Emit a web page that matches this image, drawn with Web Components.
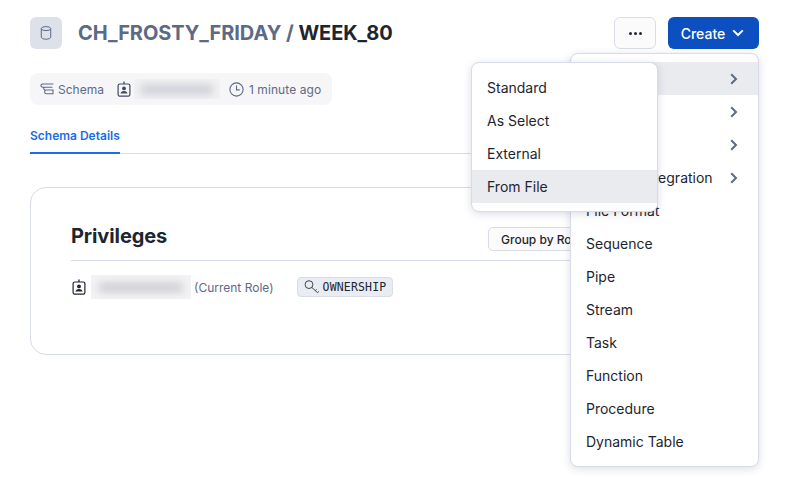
<!DOCTYPE html>
<html>
<head>
<meta charset="utf-8">
<style>
  html, body { margin: 0; background: #fff; }
  body { font-family: Inter, "Liberation Sans", sans-serif; color: #1e252f; overflow: hidden; width: 797px; height: 478px; }
</style>
</head>
<body>
<schema-page></schema-page>

<script>
const icons = {
  db: `<svg width="16" height="16" viewBox="0 0 16 16" fill="none" stroke="#5d6a85" stroke-width="1"><ellipse cx="8" cy="3.6" rx="4.7" ry="2"/><path d="M3.3 3.6v8.6c0 1.2 2.1 2 4.7 2s4.7-.8 4.7-2V3.6"/></svg>`,
  schema: `<svg width="16" height="16" viewBox="0 0 16 16" fill="none" stroke="#5d6a85" stroke-width="1.1" stroke-linecap="round"><path d="M14 3H3.5a1.6 1.6 0 0 0 0 3.2H13a1 1 0 0 1 0 0M6 6.2a1.4 1.4 0 0 0 .2 2.8"/><path d="M14 9H7.5a1.9 1.9 0 0 0 0 3.8H14V9z"/></svg>`,
  role: (c) => `<svg width="14" height="16" viewBox="0 0 14 16" fill="none"><path d="M7 .6v2.4" stroke="${c}" stroke-width="1.3"/><rect x="1.1" y="3" width="11.8" height="12.2" rx="1.6" stroke="${c}" stroke-width="1.2"/><circle cx="7" cy="7.4" r="1.9" fill="${c}"/><path d="M3.6 12.6c0-1.7 1.4-2.6 3.4-2.6s3.4.9 3.4 2.6z" fill="${c}"/></svg>`,
  clock: `<svg width="15" height="15" viewBox="0 0 15 15" fill="none" stroke="#5d6a85" stroke-width="1.1"><circle cx="7.5" cy="7.5" r="6.6"/><path d="M7.5 3.6v4.3h3.2"/></svg>`,
  key: `<svg width="17" height="14" viewBox="0 0 17 14" fill="none" stroke="#3c4656" stroke-width="1"><circle cx="5" cy="4.6" r="3.9"/><path d="M7.8 7.4l5.6 5.2M11.2 10.6l1.4-1.1M13.4 12.6l1.5-1.2"/></svg>`,
  chev: `<svg width="10" height="12" viewBox="0 0 10 12" fill="none" stroke="#5d6a85" stroke-width="2"><path d="M2.2 1.2 7 6l-4.8 4.8"/></svg>`,
  down: `<svg width="12" height="8" viewBox="0 0 12 8" fill="none" stroke="#fff" stroke-width="2"><path d="M1.2 1.4 6 6l4.8-4.6"/></svg>`
};

class BlurName extends HTMLElement {
  constructor() {
    super();
    this.attachShadow({mode: 'open'}).innerHTML = `
      <style>
        :host { display: inline-flex; align-items: center; justify-content: center; background: #f2f2f3; overflow: hidden; }
        i { display: block; width: 84%; height: 9px; background: #cbccd3; filter: blur(4px); }
      </style>
      <i></i>`;
  }
}
customElements.define('blur-name', BlurName);

class PageHeader extends HTMLElement {
  constructor() {
    super();
    this.attachShadow({mode: 'open'}).innerHTML = `
      <style>
        :host { display: flex; align-items: center; height: 32px; }
        .tile { width: 32px; height: 32px; border-radius: 6px; background: #dde2ea; display: flex; align-items: center; justify-content: center; margin-right: 16px; }
        h1 { margin: 0; font-size: 20px; line-height: 32px; font-weight: 700; letter-spacing: -.05px; color: #5d6a85; flex: 1; white-space: nowrap; }
        h1 b { font-weight: 700; color: #1e252f; }
        button { font-family: inherit; height: 32px; border-radius: 6px; display: flex; align-items: center; justify-content: center; padding: 0; }
        .more { width: 42px; border: 1px solid #dadde8; background: #fbfbfc; margin-right: 12px; gap: 2px; }
        .more i { width: 3px; height: 3px; border-radius: 50%; background: #1e252f; }
        .create { width: 91px; border: 0; background: #0b4fc0; color: #fff; font-size: 14px; font-weight: 500; gap: 7px; padding-right: 2px; }
      </style>
      <div class="tile">${icons.db}</div>
      <h1>CH_FROSTY_FRIDAY / <b>WEEK_80</b></h1>
      <button class="more"><i></i><i></i><i></i></button>
      <button class="create">Create ${icons.down}</button>`;
  }
}
customElements.define('page-header', PageHeader);

class MetaBar extends HTMLElement {
  constructor() {
    super();
    this.attachShadow({mode: 'open'}).innerHTML = `
      <style>
        :host { display: inline-flex; align-items: center; height: 32px; width: 302px; box-sizing: border-box; background: #f6f6f8; border-radius: 8px; padding-left: 9px; font-size: 12px; color: #5d6a85; }
        svg { flex: none; }
        .schema { margin-left: 3px; margin-right: 13px; }
        blur-name { width: 86px; height: 20px; margin-left: 3px; margin-right: 9px; }
        .ago { margin-left: 5px; white-space: nowrap; letter-spacing: .08px; }
      </style>
      ${icons.schema}<span class="schema">Schema</span>
      ${icons.role('#3f4a60')}<blur-name></blur-name>
      ${icons.clock}<span class="ago">1 minute ago</span>`;
  }
}
customElements.define('meta-bar', MetaBar);

class TabBar extends HTMLElement {
  constructor() {
    super();
    this.attachShadow({mode: 'open'}).innerHTML = `
      <style>
        :host { display: block; border-bottom: 1px solid #d8dbe8; height: 33px; }
        span { display: inline-block; height: 25px; padding-top: 7px; line-height: 18px; font-size: 12px; font-weight: 600; color: #1a6ce7; border-bottom: 2px solid #1a6ce7; }
      </style>
      <span><slot></slot></span>`;
  }
}
customElements.define('tab-bar', TabBar);

class PrivilegesCard extends HTMLElement {
  constructor() {
    super();
    this.attachShadow({mode: 'open'}).innerHTML = `
      <style>
        :host { display: block; box-sizing: border-box; height: 168px; border: 1px solid #d8dbe8; border-radius: 16px; padding: 39px 40px 0; }
        .head { display: flex; justify-content: space-between; height: 33px; border-bottom: 1px solid #d8dbe8; }
        h2 { margin: 0; font-size: 20px; font-weight: 700; letter-spacing: -.1px; color: #1e252f; line-height: 18px; }
        .group { font-family: inherit; font-size: 12px; font-weight: 500; color: #1e252f; background: #fbfbfc; border: 1px solid #d8dbe8; border-radius: 5px; height: 24px; width: 130px; padding: 0 0 0 12px; text-align: left; margin-right: 100px; }
        .row { display: flex; align-items: center; height: 24px; margin-top: 14px; font-size: 12px; color: #5d6a85; padding-left: 1px; }
        blur-name { width: 100px; height: 24px; margin-left: 5px; margin-right: 3px; background: #f3f3f3; }
        .tag { display: inline-flex; align-items: center; gap: 2px; margin-left: 23px; height: 20px; box-sizing: border-box; padding: 0 6px; background: #e9ecf2; border: 1px solid #d8dbe8; border-radius: 4px; font-family: "DejaVu Sans Mono", "Liberation Mono", monospace; font-size: 11.5px; color: #1e252f; letter-spacing: .17px; }
      </style>
      <div class="head"><h2><slot name="title"></slot></h2><button class="group">Group by Role</button></div>
      <div class="row">
        ${icons.role('#1e252f')}<blur-name></blur-name><span>(Current Role)</span>
        <span class="tag">${icons.key}OWNERSHIP</span>
      </div>`;
  }
}
customElements.define('privileges-card', PrivilegesCard);

// items are passed as child elements, one per row
class MenuRow extends HTMLElement {
  constructor() {
    super();
    this.attachShadow({mode: 'open'}).innerHTML = `
      <style>
        :host { display: flex; align-items: center; justify-content: space-between; height: 33px; padding: 0 19px 0 15px; font-size: 14px; color: #1e252f; white-space: nowrap; }
        :host([active]) { background: #e9ebef; }
        span { display: none; line-height: 0; }
        :host([sub]) span { display: block; }
      </style>
      <slot></slot><span>${icons.chev}</span>`;
  }
}
customElements.define('menu-row', MenuRow);

class DropMenu extends HTMLElement {
  constructor() {
    super();
    this.attachShadow({mode: 'open'}).innerHTML = `
      <style>
        :host { display: block; position: absolute; box-sizing: border-box; background: #fff; border: 1px solid #d8dbe8; border-radius: 8px; padding: 8px 0; box-shadow: 0 2px 8px rgba(60,70,110,.18); overflow: hidden; }
      </style>
      <slot></slot>`;
  }
}
customElements.define('drop-menu', DropMenu);

class SchemaPage extends HTMLElement {
  constructor() {
    super();
    this.attachShadow({mode: 'open'}).innerHTML = `
      <style>
        :host { display: block; position: relative; width: 797px; height: 478px; box-sizing: border-box; padding: 17px 38px 0 30px; }
        meta-bar { margin-top: 24px; }
        tab-bar { margin-top: 15px; }
        privileges-card { margin-top: 33px; }
        .main { left: 570px; top: 53px; width: 189px; height: 414px; }
        .sub { left: 471px; top: 62px; width: 187px; height: 150px; }
      </style>
      <page-header></page-header>
      <meta-bar></meta-bar>
      <tab-bar>Schema Details</tab-bar>
      <privileges-card><span slot="title">Privileges</span></privileges-card>
      <drop-menu class="main">
        <menu-row sub active>Table</menu-row>
        <menu-row sub>View</menu-row>
        <menu-row sub>Stage</menu-row>
        <menu-row sub>Storage Integration</menu-row>
        <menu-row>File Format</menu-row>
        <menu-row>Sequence</menu-row>
        <menu-row>Pipe</menu-row>
        <menu-row>Stream</menu-row>
        <menu-row>Task</menu-row>
        <menu-row>Function</menu-row>
        <menu-row>Procedure</menu-row>
        <menu-row>Dynamic Table</menu-row>
      </drop-menu>
      <drop-menu class="sub">
        <menu-row>Standard</menu-row>
        <menu-row>As Select</menu-row>
        <menu-row>External</menu-row>
        <menu-row active>From File</menu-row>
      </drop-menu>`;
  }
}
customElements.define('schema-page', SchemaPage);
</script>
</body>
</html>
